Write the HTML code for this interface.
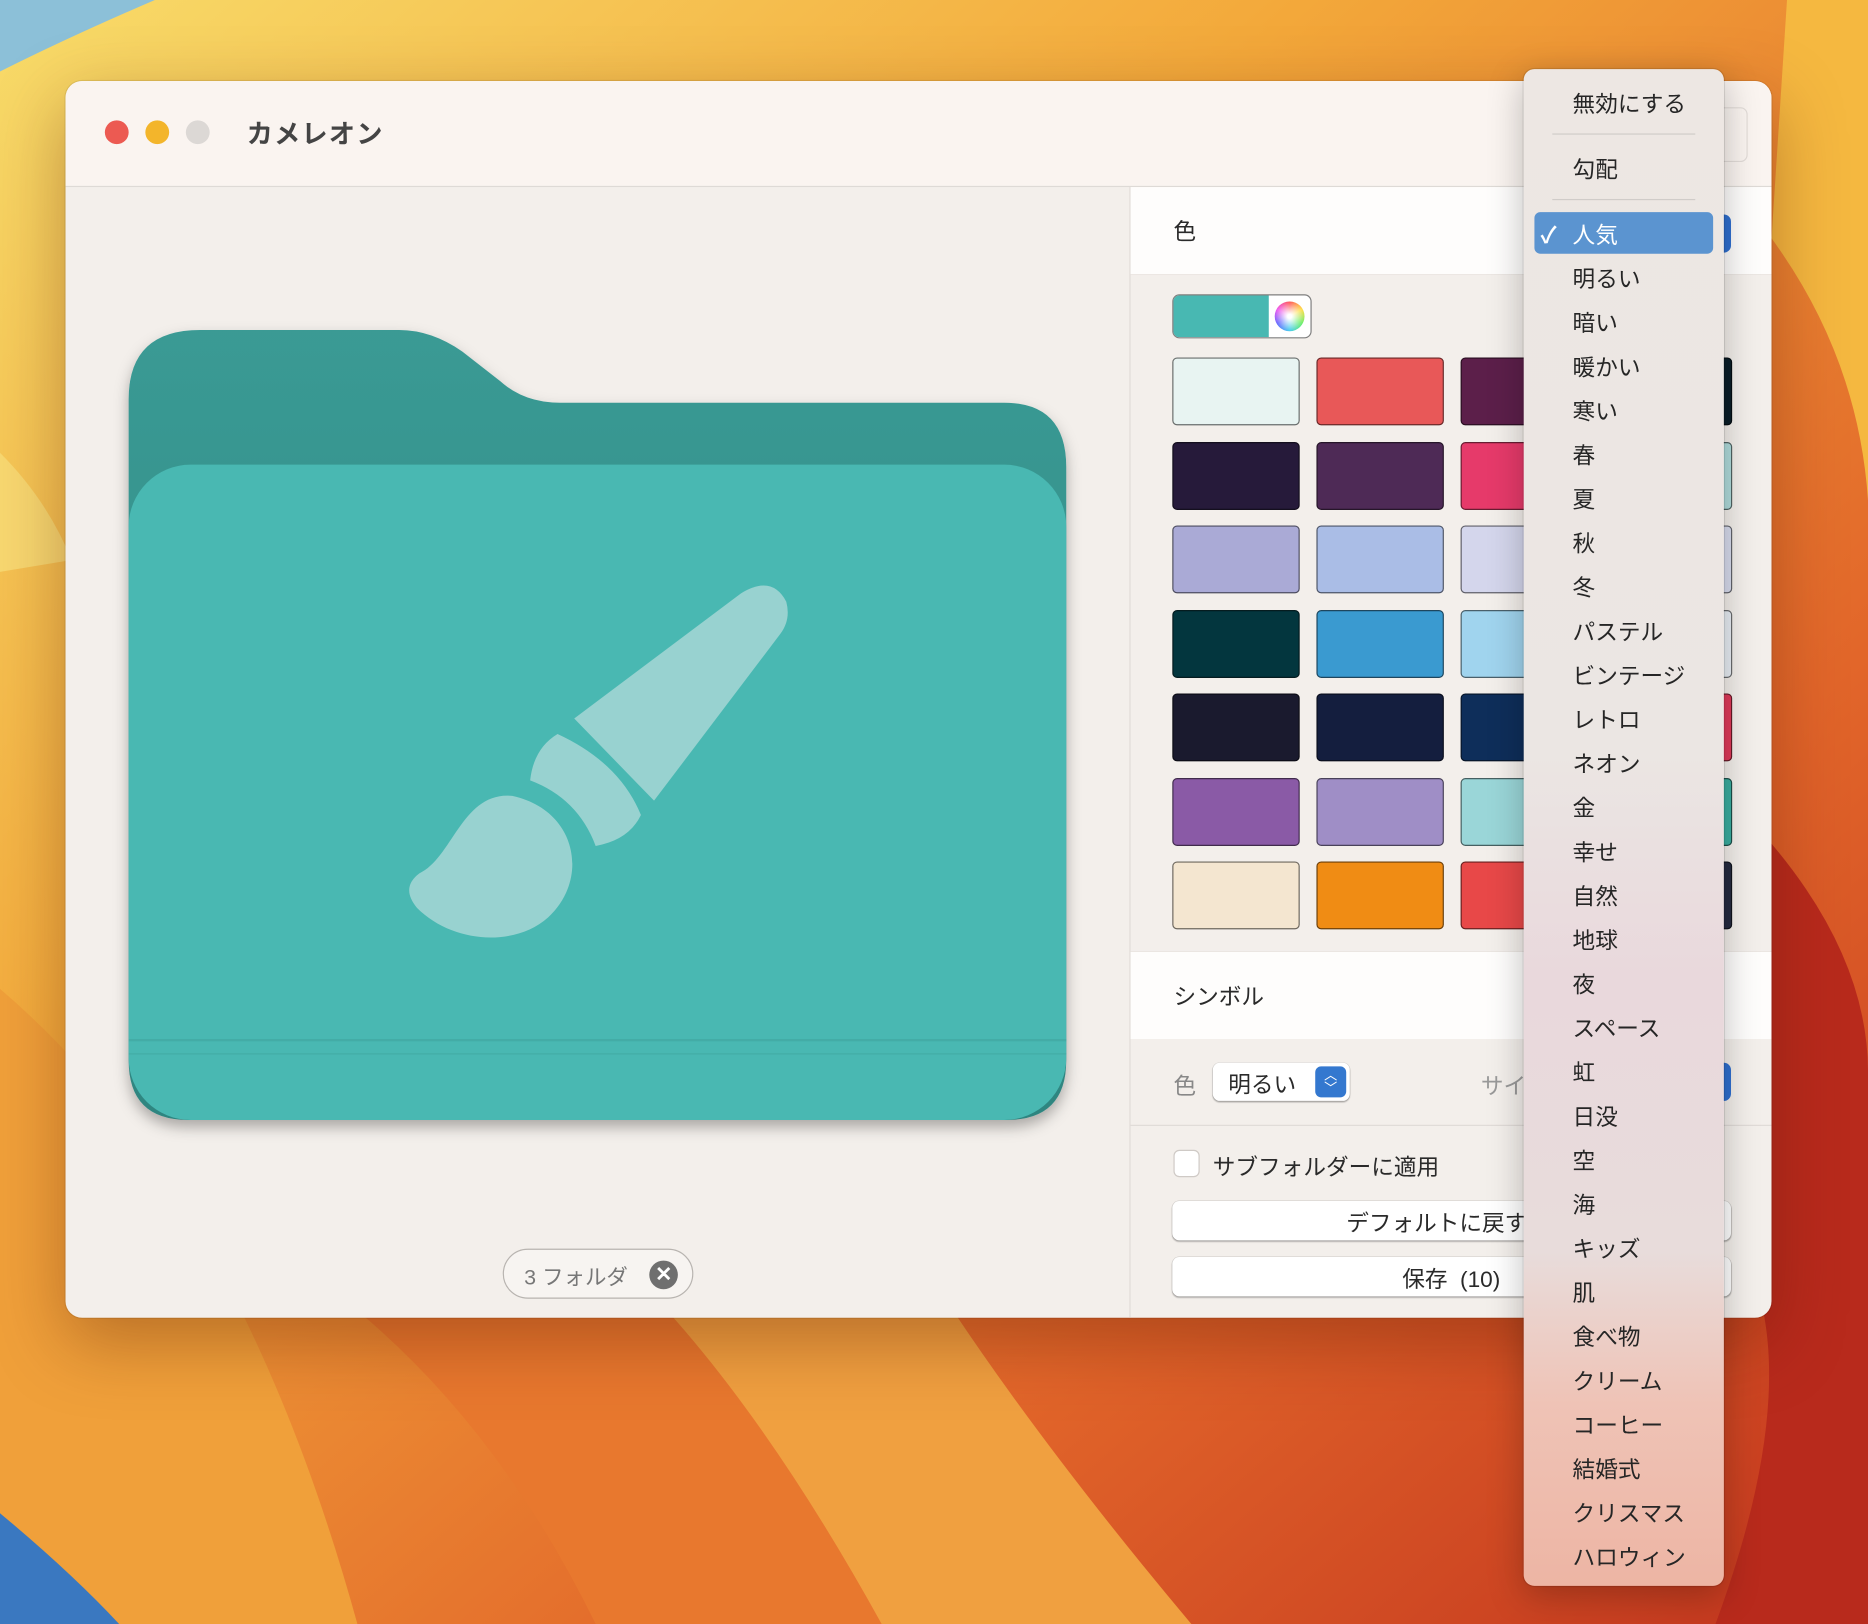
<!DOCTYPE html>
<html><head><meta charset="utf-8">
<style>
html,body{margin:0;padding:0;width:1868px;height:1624px;overflow:hidden;background:#e8902a}
#s{position:absolute;left:0;top:0;width:1568px;height:1363px;transform:scale(1.19133,1.19149);transform-origin:0 0;font-family:"Liberation Sans","Noto Sans CJK JP",sans-serif;color:#2a2a2a}
.a{position:absolute}
.win{left:55px;top:68px;width:1432px;height:1038px;border-radius:14px;background:#f3efeb;overflow:hidden;box-shadow:0 20px 60px rgba(80,20,0,.35),0 0 0 1px rgba(0,0,0,.08)}
.sw{position:absolute;width:105px;height:55px;border:1px solid rgba(0,0,0,.55);border-radius:4px}
.menu{left:1279px;top:58px;width:168px;height:1273px;border-radius:9px;background:linear-gradient(180deg,#ede7e3 0%,#ebe6e3 45%,#e9d8dc 60%,#e8dcdb 78%,#efc3b6 88%,#edb5a4 100%);box-shadow:0 8px 30px rgba(0,0,0,.25),0 0 0 1px rgba(0,0,0,.1)}
.mi{position:absolute;left:41px;font-size:19px;color:#262626;line-height:24px;margin-top:3px}
.btn{position:absolute;background:#fff;border-radius:6px;box-shadow:0 1px 1px rgba(0,0,0,.25),0 0 0 .5px rgba(0,0,0,.12)}
</style></head><body>
<div id="s">
<svg class="a" style="left:0;top:0" width="1568" height="1363" viewBox="0 0 1568 1363">
<defs>
<linearGradient id="bg" x1="0" y1="0" x2="1" y2="1"><stop offset="0" stop-color="#f8dc6a"/><stop offset=".35" stop-color="#f3a83a"/><stop offset=".7" stop-color="#e2662a"/><stop offset="1" stop-color="#c2341e"/></linearGradient>
</defs>
<rect width="1568" height="1363" fill="url(#bg)"/>
<path d="M0 0 L130 0 Q60 30 0 60Z" fill="#8cc0d8"/>
<path d="M0 380 Q40 420 60 470 L0 480Z" fill="#f8d870"/>
<path d="M0 830 Q200 1000 300 1363 L0 1363Z" fill="#f0a03a"/>
<path d="M0 1270 Q60 1320 100 1363 L0 1363Z" fill="#3a78c0"/>
<path d="M300 1100 Q420 1200 500 1363 L740 1363 Q650 1200 560 1100Z" fill="#e8782e"/>
<path d="M560 1100 Q650 1200 740 1363 L1000 1363 Q880 1220 800 1100Z" fill="#f0a040"/>
<path d="M1480 700 Q1568 800 1568 900 L1568 1363 L1440 1363 Q1500 1200 1480 1100Z" fill="#b82a1c"/>
<path d="M1487 200 Q1560 300 1568 420 L1568 0 L1500 0Z" fill="#f5b840"/>
</svg>

<div class="a win">
  <div class="a" style="left:0;top:0;width:1432px;height:88px;background:#faf4f0;border-bottom:1px solid #dedad6"></div>
  <div class="a" style="left:33px;top:33px;width:20px;height:20px;border-radius:50%;background:#ec5a52"></div>
  <div class="a" style="left:67px;top:33px;width:20px;height:20px;border-radius:50%;background:#f3b52b"></div>
  <div class="a" style="left:101px;top:33px;width:20px;height:20px;border-radius:50%;background:#dcd8d5"></div>
  <div class="a" style="left:152px;top:27px;font-size:22px;color:#444;font-weight:bold;letter-spacing:1px">カメレオン</div>
  <div class="a" style="left:1380px;top:22px;width:30px;height:44px;border-radius:6px;border:1px solid #e2dcd8"></div>
  <div class="a" style="left:893px;top:89px;width:1px;height:949px;background:#e0dbd7"></div>
  <div class="a" style="left:894px;top:89px;width:538px;height:73px;background:#fefdfc;border-bottom:1px solid #ebe6e2"></div>
  <div class="a" style="left:930px;top:112px;font-size:19px">色</div>
  <div class="a" style="left:929px;top:179px;width:115px;height:35px;border-radius:6px;border:1px solid rgba(0,0,0,.5);overflow:hidden;background:#fff">
    <div class="a" style="left:0;top:0;width:80px;height:35px;background:#48b8b2"></div>
    <div class="a" style="left:85px;top:5px;width:25px;height:25px;border-radius:50%;background:conic-gradient(#f55,#fd4,#6e6,#4ce,#66f,#e5e,#f55)"></div>
    <div class="a" style="left:85px;top:5px;width:25px;height:25px;border-radius:50%;background:radial-gradient(#fff 10%,rgba(255,255,255,0) 70%)"></div>
  </div>
  <div class="a" style="left:894px;top:730px;width:538px;height:73px;background:#fefdfc;border-top:1px solid #ebe6e2"></div>
  <div class="a" style="left:930px;top:754px;font-size:19px">シンボル</div>
  <div class="a" style="left:930px;top:829px;font-size:19px;color:#888">色</div>
  <div class="btn" style="left:963px;top:824px;width:115px;height:32px"></div>
  <div class="a" style="left:976px;top:828px;font-size:19px">明るい</div>
  <div class="a" style="left:1049px;top:827px;width:26px;height:26px;border-radius:5px;background:#3478cf;color:#fff;font-size:11px;line-height:11px;text-align:center"><div style="margin-top:3px">︿</div><div>﹀</div></div>
  <div class="a" style="left:1188px;top:829px;font-size:19px;color:#999">サイ</div>
  <div class="a" style="left:894px;top:876px;width:538px;height:1px;background:#e0dbd7"></div>
  <div class="a" style="left:930px;top:897px;width:20px;height:21px;border-radius:5px;background:#fff;border:1px solid #cfcac6"></div>
  <div class="a" style="left:963px;top:897px;font-size:19px">サブフォルダーに適用</div>
  <div class="btn" style="left:929px;top:940px;width:469px;height:33px"></div>
  <div class="a" style="left:1075px;top:944px;font-size:19px">デフォルトに戻す</div>
  <div class="btn" style="left:929px;top:987px;width:469px;height:33px"></div>
  <div class="a" style="left:1122px;top:991px;font-size:19px">保存&nbsp;&nbsp;(10)</div>
  <div class="a" style="left:367px;top:980px;width:158px;height:40px;border-radius:21px;border:1px solid #b8b4b0;background:#f7f4f1"></div>
  <div class="a" style="left:385px;top:990px;font-size:18px;color:#777">3 フォルダ</div>
  <div class="a" style="left:490px;top:990px;width:24px;height:24px;border-radius:50%;background:#6f6f6f;color:#fff;font-size:17px;line-height:24px;text-align:center;font-weight:bold">✕</div>
</div>

<div class="sw" style="left:984px;top:300px;background:#e8f4f2"></div>
<div class="sw" style="left:1105px;top:300px;background:#e85858"></div>
<div class="sw" style="left:1226px;top:300px;background:#5c1f4a"></div>
<div class="sw" style="left:1347px;top:300px;background:#0a1e28"></div>
<div class="sw" style="left:984px;top:371px;background:#261a3a"></div>
<div class="sw" style="left:1105px;top:371px;background:#4e2a56"></div>
<div class="sw" style="left:1226px;top:371px;background:#e63a6a"></div>
<div class="sw" style="left:1347px;top:371px;background:#b0dcdc"></div>
<div class="sw" style="left:984px;top:441px;background:#aaaad6"></div>
<div class="sw" style="left:1105px;top:441px;background:#aabde6"></div>
<div class="sw" style="left:1226px;top:441px;background:#d4d6ec"></div>
<div class="sw" style="left:1347px;top:441px;background:#d8dcee"></div>
<div class="sw" style="left:984px;top:512px;background:#03363e"></div>
<div class="sw" style="left:1105px;top:512px;background:#3a9ad0"></div>
<div class="sw" style="left:1226px;top:512px;background:#a0d4ee"></div>
<div class="sw" style="left:1347px;top:512px;background:#e8eef4"></div>
<div class="sw" style="left:984px;top:582px;background:#1a1a2e"></div>
<div class="sw" style="left:1105px;top:582px;background:#141e3e"></div>
<div class="sw" style="left:1226px;top:582px;background:#0e2e5a"></div>
<div class="sw" style="left:1347px;top:582px;background:#e03a5a"></div>
<div class="sw" style="left:984px;top:653px;background:#8a5aa6"></div>
<div class="sw" style="left:1105px;top:653px;background:#9f8ec6"></div>
<div class="sw" style="left:1226px;top:653px;background:#9ad6d8"></div>
<div class="sw" style="left:1347px;top:653px;background:#3aaea0"></div>
<div class="sw" style="left:984px;top:723px;background:#f4e6d0"></div>
<div class="sw" style="left:1105px;top:723px;background:#f08c14"></div>
<div class="sw" style="left:1226px;top:723px;background:#e84848"></div>
<div class="sw" style="left:1347px;top:723px;background:#252a40"></div>
<div class="a" style="left:1420px;top:180px;width:33px;height:32px;border-radius:6px;background:#2f6fd0"></div>
<div class="a" style="left:1420px;top:892px;width:33px;height:32px;border-radius:6px;background:#2f6fd0"></div>

<svg class="a" style="left:0;top:0" width="1000" height="1000" viewBox="0 0 1000 1000">
<defs>
<linearGradient id="bk" x1="0" y1="0" x2="0" y2="1"><stop offset="0" stop-color="#3a9a94"/><stop offset="1" stop-color="#2f8580"/></linearGradient>
<filter id="sh" x="-10%" y="-10%" width="120%" height="130%"><feDropShadow dx="0" dy="6" stdDeviation="6" flood-color="#000" flood-opacity=".3"/></filter>
</defs>
<g filter="url(#sh)">
<path d="M108 335 Q108 277 168 277 L335 277 Q362 277 388 295 L420 320 Q440 338 470 338 L843 338 Q895 338 895 392 L895 890 Q895 940 845 940 L158 940 Q108 940 108 890Z" fill="url(#bk)"/>
<rect x="108" y="390" width="787" height="550" rx="52" fill="#48b8b2"/>
</g>
<rect x="108" y="872" width="787" height="2" fill="#43aca6"/>
<rect x="108" y="884" width="787" height="1" fill="#43aca6"/>
<g fill="#98d2d0">
<path d="M482 603 L622 498 Q648 482 660 505 Q664 520 655 532 L549 672 Z"/>
<path d="M468 616 Q520 640 538 684 Q528 705 500 710 Q485 670 445 655 Q448 628 468 616 Z"/>
<path d="M430 668 C388 664 380 720 352 733 Q336 745 350 762 C380 792 432 795 460 770 C495 738 485 680 430 668Z"/>
</g>
</svg>

<div class="a menu">
  <div class="mi" style="top:16px">無効にする</div>
  <div class="a" style="left:24px;top:54px;width:120px;height:1px;background:#d0ccc9"></div>
  <div class="mi" style="top:71px">勾配</div>
  <div class="a" style="left:24px;top:109px;width:120px;height:1px;background:#d0ccc9"></div>
  <div class="a" style="left:9px;top:120px;width:150px;height:35px;border-radius:5px;background:#5b94d0"></div>
  <div class="mi" style="top:126px;left:14px;color:#fff;font-weight:bold">✓</div>
  <div class="mi" style="top:126px;color:#fff">人気</div>
  <div class="mi" style="top:163px">明るい</div>
  <div class="mi" style="top:200px">暗い</div>
  <div class="mi" style="top:237px">暖かい</div>
  <div class="mi" style="top:274px">寒い</div>
  <div class="mi" style="top:311px">春</div>
  <div class="mi" style="top:348px">夏</div>
  <div class="mi" style="top:385px">秋</div>
  <div class="mi" style="top:422px">冬</div>
  <div class="mi" style="top:459px">パステル</div>
  <div class="mi" style="top:496px">ビンテージ</div>
  <div class="mi" style="top:533px">レトロ</div>
  <div class="mi" style="top:570px">ネオン</div>
  <div class="mi" style="top:607px">金</div>
  <div class="mi" style="top:644px">幸せ</div>
  <div class="mi" style="top:681px">自然</div>
  <div class="mi" style="top:718px">地球</div>
  <div class="mi" style="top:755px">夜</div>
  <div class="mi" style="top:792px">スペース</div>
  <div class="mi" style="top:829px">虹</div>
  <div class="mi" style="top:866px">日没</div>
  <div class="mi" style="top:903px">空</div>
  <div class="mi" style="top:940px">海</div>
  <div class="mi" style="top:977px">キッズ</div>
  <div class="mi" style="top:1014px">肌</div>
  <div class="mi" style="top:1051px">食べ物</div>
  <div class="mi" style="top:1088px">クリーム</div>
  <div class="mi" style="top:1125px">コーヒー</div>
  <div class="mi" style="top:1162px">結婚式</div>
  <div class="mi" style="top:1199px">クリスマス</div>
  <div class="mi" style="top:1236px">ハロウィン</div>
</div>
</div>
</body></html>
